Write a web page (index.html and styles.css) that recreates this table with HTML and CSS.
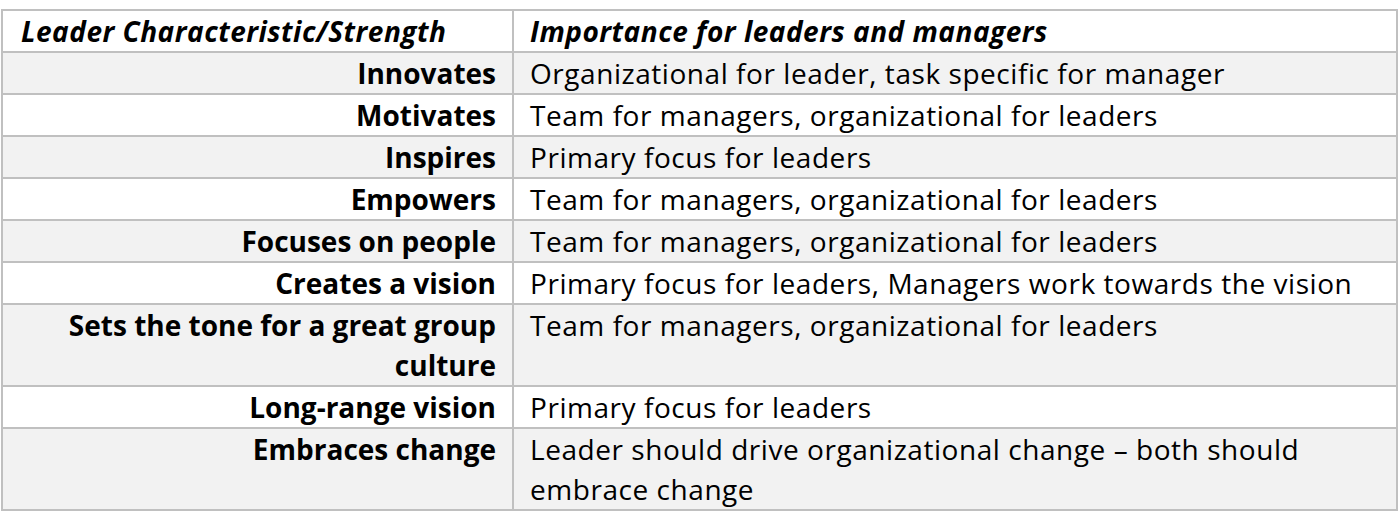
FILE: index.html
```html
<!DOCTYPE html>
<html lang="en">
<head>
<meta charset="utf-8">
<title>Leader vs Manager</title>
<link rel="stylesheet" href="styles.css">
</head>
<body>
<table class="grid">
  <colgroup><col class="c1"><col class="c2"></colgroup>
  <thead>
    <tr class="head"><th class="k">Leader Characteristic/Strength</th><th class="v">Importance for leaders and managers</th></tr>
  </thead>
  <tbody>
    <tr class="alt"><td class="k">Innovates</td><td class="v">Organizational for leader, task specific for manager</td></tr>
    <tr><td class="k">Motivates</td><td class="v">Team for managers, organizational for leaders</td></tr>
    <tr class="alt"><td class="k">Inspires</td><td class="v">Primary focus for leaders</td></tr>
    <tr><td class="k">Empowers</td><td class="v">Team for managers, organizational for leaders</td></tr>
    <tr class="alt"><td class="k">Focuses on people</td><td class="v">Team for managers, organizational for leaders</td></tr>
    <tr><td class="k">Creates a vision</td><td class="v">Primary focus for leaders, Managers work towards the vision</td></tr>
    <tr class="alt"><td class="k">Sets the tone for a great group<br>culture</td><td class="v">Team for managers, organizational for leaders</td></tr>
    <tr><td class="k">Long-range vision</td><td class="v">Primary focus for leaders</td></tr>
    <tr class="alt"><td class="k">Embraces change</td><td class="v">Leader should drive organizational change – both should<br>embrace change</td></tr>
  </tbody>
</table>
</body>
</html>
```
FILE: styles.css
```css
html, body {
  margin: 0;
  padding: 0;
  background: #ffffff;
}
body {
  padding: 9px 0 0 1px;
  font-family: "Open Sans", "Liberation Sans", sans-serif;
  color: #000000;
}
.grid {
  border-collapse: collapse;
  width: 1397px;
  table-layout: fixed;
  font-size: 28px;
  line-height: 40px;
}
.c1 { width: 511px; }
.grid th, .grid td {
  border: 2px solid #c0c0c0;
  padding: 0;
  vertical-align: top;
  white-space: nowrap;
}
.grid tr.alt td { background: #f2f2f2; }
.head th {
  font-style: italic;
  font-weight: 700;
  text-align: left;
  letter-spacing: 0.5px;
}
.k {
  text-align: right;
  font-weight: 700;
  padding-right: 16px !important;
}
.head th.k {
  text-align: left;
  padding-left: 18px;
}
.v {
  text-align: left;
  padding-left: 16px !important;
  letter-spacing: 0.55px;
}
.head th.v { letter-spacing: 0.5px; }
```
